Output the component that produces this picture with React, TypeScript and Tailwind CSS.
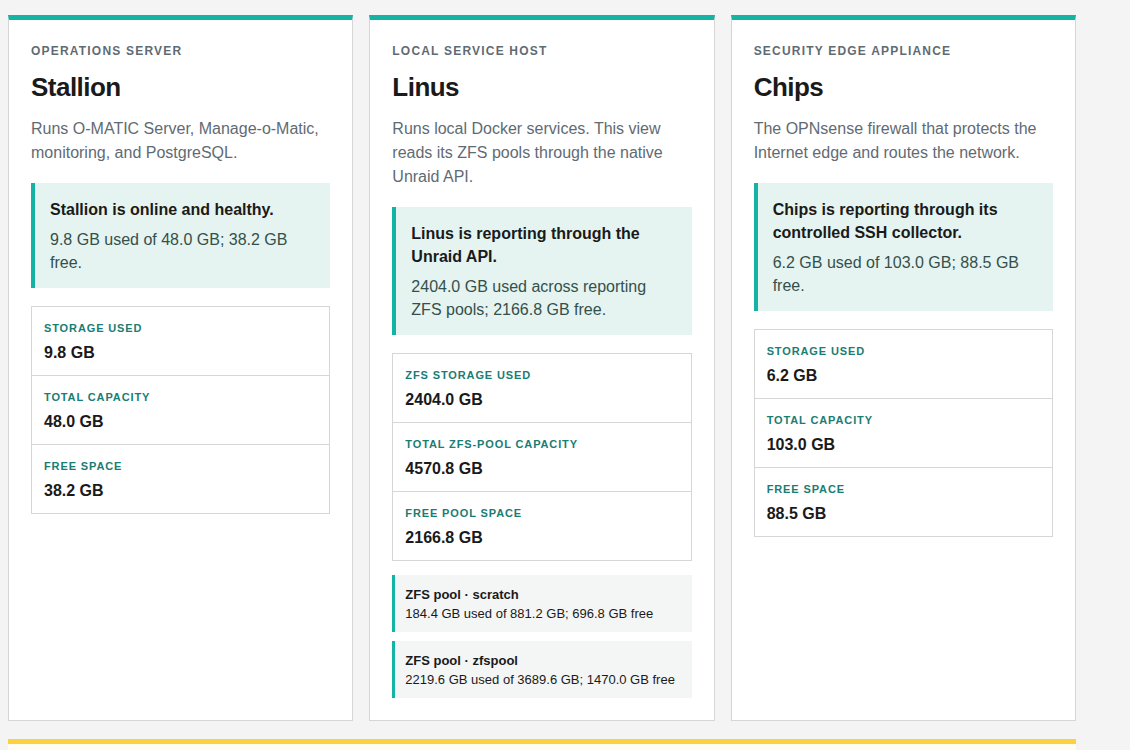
import React from "react";

type Stat = { label: string; value: string };
type Pool = { name: string; detail: string };

type Host = {
  kicker: string;
  name: string;
  blurb: string;
  statusTitle: string;
  statusBody: string;
  stats: Stat[];
  pools?: Pool[];
};

const HOSTS: Host[] = [
  {
    kicker: "Operations server",
    name: "Stallion",
    blurb: "Runs O-MATIC Server, Manage-o-Matic, monitoring, and PostgreSQL.",
    statusTitle: "Stallion is online and healthy.",
    statusBody: "9.8 GB used of 48.0 GB; 38.2 GB free.",
    stats: [
      { label: "Storage used", value: "9.8 GB" },
      { label: "Total capacity", value: "48.0 GB" },
      { label: "Free space", value: "38.2 GB" },
    ],
  },
  {
    kicker: "Local service host",
    name: "Linus",
    blurb: "Runs local Docker services. This view reads its ZFS pools through the native Unraid API.",
    statusTitle: "Linus is reporting through the Unraid API.",
    statusBody: "2404.0 GB used across reporting ZFS pools; 2166.8 GB free.",
    stats: [
      { label: "ZFS storage used", value: "2404.0 GB" },
      { label: "Total ZFS-pool capacity", value: "4570.8 GB" },
      { label: "Free pool space", value: "2166.8 GB" },
    ],
    pools: [
      { name: "ZFS pool · scratch", detail: "184.4 GB used of 881.2 GB; 696.8 GB free" },
      { name: "ZFS pool · zfspool", detail: "2219.6 GB used of 3689.6 GB; 1470.0 GB free" },
    ],
  },
  {
    kicker: "Security edge appliance",
    name: "Chips",
    blurb: "The OPNsense firewall that protects the Internet edge and routes the network.",
    statusTitle: "Chips is reporting through its controlled SSH collector.",
    statusBody: "6.2 GB used of 103.0 GB; 88.5 GB free.",
    stats: [
      { label: "Storage used", value: "6.2 GB" },
      { label: "Total capacity", value: "103.0 GB" },
      { label: "Free space", value: "88.5 GB" },
    ],
  },
];

function HostCard({ host }: { host: Host }) {
  return (
    <section className="flex flex-col border border-[#d6d6d6] border-t-[5px] border-t-[#14b3a4] bg-white px-[22px] pt-[23px] pb-[22px]">
      <p className="text-[12px] font-bold uppercase leading-4 tracking-[0.1em] text-[#5f6b73]">{host.kicker}</p>
      <h2 className="mt-[12px] text-[26px] font-bold leading-8 tracking-[-0.02em] text-[#1a1a1a]">{host.name}</h2>
      <p className="mt-[14px] text-[16px] leading-6 text-[#5f6b73]">{host.blurb}</p>

      <div className="mt-[18px] border-l-4 border-[#14b3a4] bg-[#e5f4f0] pt-[15px] pr-[15px] pb-[14px] pl-[15px]">
        <p className="text-[16px] font-bold leading-[23px] text-[#1a1a1a]">{host.statusTitle}</p>
        <p className="mt-[7px] text-[16px] leading-[23px] text-[#34504c]">{host.statusBody}</p>
      </div>

      <div className="mt-[18px] border border-[#d6d6d6]">
        {host.stats.map((s, i) => (
          <div key={s.label} className={i > 0 ? "border-t border-[#d6d6d6] px-3 pt-[13px] pb-[11px]" : "px-3 pt-[13px] pb-[11px]"}>
            <p className="text-[11px] font-bold uppercase leading-4 tracking-[0.08em] text-[#1a7d74]">{s.label}</p>
            <p className="mt-[6px] text-[16px] font-bold leading-[22px] text-[#1a1a1a]">{s.value}</p>
          </div>
        ))}
      </div>

      {host.pools && (
        <div className="mt-[14px] flex flex-col gap-[9px]">
          {host.pools.map((p) => (
            <div key={p.name} className="border-l-[3px] border-[#14b3a4] bg-[#f4f5f5] pt-[10px] pr-[10px] pb-[9px] pl-[10px]">
              <p className="text-[13px] font-bold leading-[19px] text-[#1a1a1a]">{p.name}</p>
              <p className="text-[13px] leading-[19px] text-[#1a1a1a]">{p.detail}</p>
            </div>
          ))}
        </div>
      )}
    </section>
  );
}

export default function App() {
  return (
    <div className="min-h-screen bg-[#f4f4f4] pt-[15px] pl-2 font-['Liberation_Sans',Arial,sans-serif]">
      <div className="w-[1068px]">
        <div className="grid grid-cols-3 gap-4">
          {HOSTS.map((h) => (
            <HostCard key={h.name} host={h} />
          ))}
        </div>
        {/* next section, cut off at the fold */}
        <div className="mt-[18px] h-[60px] border-t-[5px] border-[#fbd13f] bg-[#fffcf0]" />
      </div>
    </div>
  );
}
